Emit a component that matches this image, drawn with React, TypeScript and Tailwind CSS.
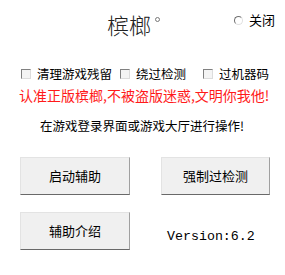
import React from "react";

const cjk = "font-['Noto_Sans_CJK_SC','Noto_Sans_CJK_JP',sans-serif]";

function Check({ label }: { label: string }) {
  return (
    <div className="flex items-center">
      <span className="w-[10px] h-[10px] border border-t-[#808080] border-l-[#808080] border-r-[#dcdcdc] border-b-[#dcdcdc] bg-[#f4f4f4] mr-[6px]" />
      <span>{label}</span>
    </div>
  );
}

function Btn({ label, w }: { label: string; w: string }) {
  return (
    <button
      className={`${w} h-[38px] bg-[#f0f0f0] border-t border-l border-t-[#e3e3e3] border-l-[#e3e3e3] border-r border-b border-r-[#a0a0a0] border-b-[#696969] text-[13px] text-black flex items-center justify-center`}
    >
      {label}
    </button>
  );
}

export default function App() {
  return (
    <div className={`w-[285px] h-[275px] bg-white text-black text-[12px] ${cjk} overflow-hidden`}>
      <div className="flex items-start pt-[12px] h-[64px]">
        <div className="ml-[107px] flex items-start">
          <span className="text-[22px] leading-[24px] font-light text-[#222]">槟榔</span>
          <span className="ml-[4px] mt-[5px] w-[5px] h-[5px] rounded-full border border-[#777]" />
        </div>
        <div className="ml-auto mr-[10px] mt-[1px] flex items-center">
          <span className="w-[9px] h-[9px] rounded-full border border-t-[#707070] border-l-[#707070] border-r-[#e0e0e0] border-b-[#e0e0e0] bg-white mr-[6px]" />
          <span className="text-[13px] leading-[14px]">关闭</span>
        </div>
      </div>
      <div className="flex items-center pl-[21px] h-[20px] text-[12.5px] leading-[14px]">
        <div className="w-[99px]"><Check label="清理游戏残留" /></div>
        <div className="w-[83px]"><Check label="绕过检测" /></div>
        <div><Check label="过机器码" /></div>
      </div>
      <div className="pl-[19px] mt-[3px] h-[18px] text-[14px] leading-[16px] text-[#ff1a1a]">
        认准正版槟榔,不被盗版迷惑,文明你我他!
      </div>
      <div className="pl-[40px] mt-[13px] h-[20px] text-[12.5px] leading-[16px]">
        在游戏登录界面或游戏大厅进行操作!
      </div>
      <div className="mt-[19px] pl-[20px] grid grid-cols-[110px_109px] gap-x-[31px] gap-y-[17px] items-center">
        <Btn label="启动辅助" w="w-[110px]" />
        <Btn label="强制过检测" w="w-[109px]" />
        <Btn label="辅助介绍" w="w-[110px]" />
        <div className="pl-[6px] pt-[12px] font-['Liberation_Mono',monospace] text-[13.3px] leading-[16px]">
          Version:6.2
        </div>
      </div>
    </div>
  );
}
